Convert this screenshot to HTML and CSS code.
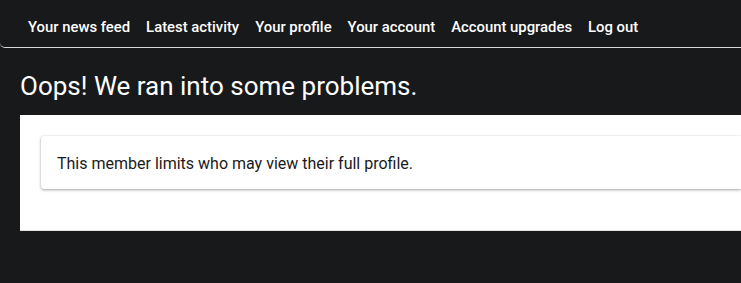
FILE: index.html
```html
<!DOCTYPE html>
<html>
<head>
<meta charset="utf-8">
<link rel="stylesheet" href="styles.css">
</head>
<body>
<nav class="topnav">
  <a href="#">Your news feed</a>
  <a href="#">Latest activity</a>
  <a href="#">Your profile</a>
  <a href="#">Your account</a>
  <a href="#">Account upgrades</a>
  <a href="#">Log out</a>
</nav>
<main class="page">
  <h1 class="title">Oops! We ran into some problems.</h1>
  <section class="panel">
    <div class="card">This member limits who may view their full profile.</div>
  </section>
</main>
</body>
</html>
```
FILE: styles.css
```css
html, body {
  margin: 0;
  padding: 0;
  background: #18191b;
  font-family: Roboto, "Liberation Sans", sans-serif;
  overflow: hidden;
}
.topnav {
  display: flex;
  gap: 16px;
  align-items: center;
  box-sizing: border-box;
  height: 48px;
  padding: 7px 0 0 28px;
  border-bottom: 1px solid #d8d8d8;
  border-bottom-left-radius: 5px;
}
.topnav a {
  color: #fff;
  text-decoration: none;
  font-size: 14.85px;
  font-weight: 500;
  line-height: 18px;
}
.page {
  padding: 0 0 0 20px;
}
.title {
  margin: 0;
  padding: 23px 0 14px;
  color: #fff;
  font-size: 26px;
  font-weight: 400;
  line-height: 30px;
}
.panel {
  background: #fff;
  padding: 21px 0 41px 21px;
  border-bottom: 1px solid #e0e0e0;
}
.card {
  background: #fff;
  padding: 19px 16px 16px;
  font-size: 16px;
  color: #1a1a1a;
  line-height: 18px;
  border-radius: 3px 0 0 3px;
  box-shadow: 0 1px 3px rgba(0,0,0,0.35), 0 0 1px rgba(0,0,0,0.15);
}
```
